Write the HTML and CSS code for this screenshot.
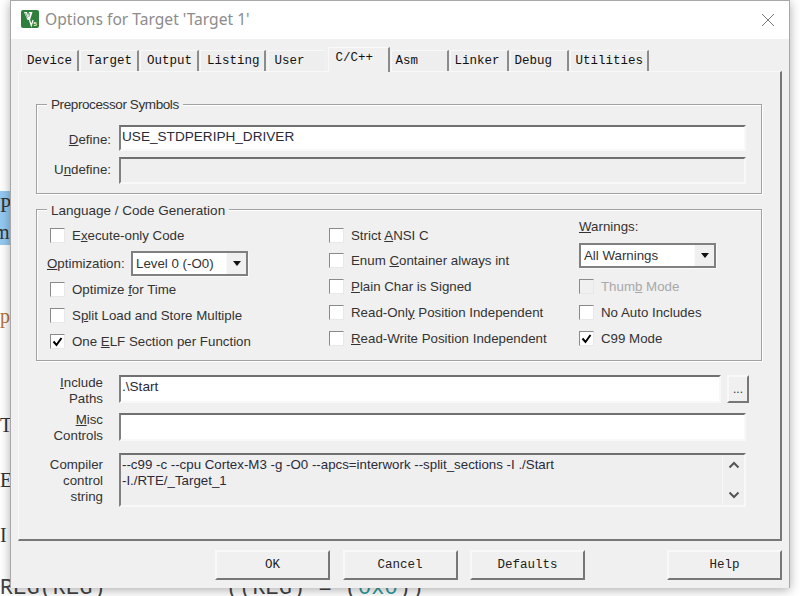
FILE: index.html
```html
<!DOCTYPE html>
<html lang="en">
<head>
<meta charset="utf-8">
<title>Options for Target 'Target 1'</title>
<link rel="stylesheet" href="styles.css">
</head>
<body>
<div class="desktop">
  <div class="code-bg">
    <div class="selection"></div>
    <span class="cg cg-p1">P</span>
    <span class="cg cg-m">m</span>
    <span class="cg cg-p2">p</span>
    <span class="cg cg-t">T</span>
    <span class="cg cg-e">E</span>
    <span class="cg cg-i">I</span>
    <span class="cg cg-reg">REG(REG)</span>
    <span class="cg cg-expr">((REG) = (<span class="teal">0x0</span>))</span>
  </div>

  <div class="window">
    <header class="titlebar">
      <svg class="logo" width="18" height="18" viewBox="0 0 18 18">
        <rect x="0" y="0" width="18" height="18" rx="2" fill="#2f7f3c"/>
        <path d="M3 2h3l1 4 1-4h3.500L9 10H6.500z" fill="#fff"/>
        <path d="M4.500 3l1.800 5M8.800 3l-1 4" stroke="#2f7f3c" stroke-width=".7" fill="none"/>
        <path d="M8.500 10l1.800 5.500 1.800-5.500" fill="none" stroke="#fff" stroke-width="1.200"/>
        <text x="12.500" y="16" class="logo-s">5</text>
      </svg>
      <span class="title">Options for Target 'Target 1'</span>
      <svg class="close" width="14" height="14" viewBox="0 0 14 14"><path d="M1 1l12 12M13 1L1 13" stroke="#777" stroke-width="1" fill="none"/></svg>
    </header>

    <nav class="tabs">
      <span class="tab">Device</span>
      <span class="tab">Target</span>
      <span class="tab">Output</span>
      <span class="tab">Listing</span>
      <span class="tab tab-user">User</span>
      <span class="tab active">C/C++</span>
      <span class="tab">Asm</span>
      <span class="tab">Linker</span>
      <span class="tab">Debug</span>
      <span class="tab">Utilities</span>
    </nav>

    <main class="panel">
      <section class="group group-pre">
        <span class="legend legend-pre">Preprocessor Symbols</span>
        <div class="field-row row-define">
          <label class="flabel"><u>D</u>efine:</label>
          <div class="input">USE_STDPERIPH_DRIVER</div>
        </div>
        <div class="field-row row-undefine">
          <label class="flabel">U<u>n</u>define:</label>
          <div class="input disabled"></div>
        </div>
      </section>

      <section class="group group-lang">
        <span class="legend legend-lang">Language / Code Generation</span>
        <div class="col col1">
          <div class="check"><i class="box"></i><span>E<u>x</u>ecute-only Code</span></div>
          <div class="opt">
            <label><u>O</u>ptimization:</label>
            <div class="select sel-opt"><span>Level 0 (-O0)</span><b class="drop"><svg width="10" height="5" viewBox="0 0 10 5"><path d="M1 0h8L5 5z" fill="#111"/></svg></b></div>
          </div>
          <div class="check"><i class="box"></i><span>Optimize <u>f</u>or Time</span></div>
          <div class="check"><i class="box"></i><span>S<u>p</u>lit Load and Store Multiple</span></div>
          <div class="check"><i class="box checked"><svg width="13" height="13" viewBox="0 0 13 13"><path d="M2.500 6.500l3 3.500 5-7" fill="none" stroke="#000" stroke-width="2"/></svg></i><span>One <u>E</u>LF Section per Function</span></div>
        </div>
        <div class="col col2">
          <div class="check check-short"><i class="box"></i><span>Strict <u>A</u>NSI C</span></div>
          <div class="check"><i class="box"></i><span>Enum <u>C</u>ontainer always int</span></div>
          <div class="check"><i class="box"></i><span><u>P</u>lain Char is Signed</span></div>
          <div class="check"><i class="box"></i><span>Read-Onl<u>y</u> Position Independent</span></div>
          <div class="check"><i class="box"></i><span><u>R</u>ead-Write Position Independent</span></div>
        </div>
        <div class="col col3">
          <label class="warn-label"><u>W</u>arnings:</label>
          <div class="select sel-warn"><span>All Warnings</span><b class="drop"><svg width="10" height="5" viewBox="0 0 10 5"><path d="M1 0h8L5 5z" fill="#111"/></svg></b></div>
          <div class="check dim"><i class="box"></i><span>Thum<u>b</u> Mode</span></div>
          <div class="check"><i class="box"></i><span>No Auto Includes</span></div>
          <div class="check"><i class="box checked"><svg width="13" height="13" viewBox="0 0 13 13"><path d="M2.500 6.500l3 3.500 5-7" fill="none" stroke="#000" stroke-width="2"/></svg></i><span>C99 Mode</span></div>
        </div>
      </section>

      <section class="lower">
        <div class="lower-row row-include">
          <label class="llabel"><u>I</u>nclude<br>Paths</label>
          <div class="input">.\Start</div>
          <button class="browse">...</button>
        </div>
        <div class="lower-row row-misc">
          <label class="llabel"><u>M</u>isc<br>Controls</label>
          <div class="input"></div>
        </div>
        <div class="lower-row row-compiler">
          <label class="llabel">Compiler<br>control<br>string</label>
          <div class="input disabled multi">
            <div class="multi-text">--c99 -c --cpu Cortex-M3 -g -O0 --apcs=interwork --split_sections -I ./Start<br>-I./RTE/_Target_1</div>
            <div class="scroll">
              <svg width="12" height="8" viewBox="0 0 12 8"><path d="M1.500 6.500L6 2l4.500 4.500" fill="none" stroke="#555" stroke-width="2"/></svg>
              <svg width="12" height="8" viewBox="0 0 12 8"><path d="M1.500 1.500L6 6l4.500-4.500" fill="none" stroke="#555" stroke-width="2"/></svg>
            </div>
          </div>
        </div>
      </section>
    </main>

    <footer class="buttons">
      <button class="btn">OK</button>
      <button class="btn">Cancel</button>
      <button class="btn">Defaults</button>
      <button class="btn btn-help">Help</button>
    </footer>
  </div>
</div>
</body>
</html>
```

FILE: styles.css
```css
* { box-sizing: border-box; }
html, body { margin: 0; padding: 0; }
body { background: #fff; font-family: "Liberation Sans", Arial, sans-serif; }
.desktop { position: relative; width: 800px; height: 596px; overflow: hidden; background: #fff; }

/* code editor visible behind the dialog */
.selection { position: absolute; left: 0; top: 191px; width: 12px; height: 54px; background: #94c9f2; }
.cg { position: absolute; font-family: "Liberation Serif", serif; font-size: 20px; line-height: 20px; color: #333; }
.cg-p1 { left: 0; top: 195px; }
.cg-m { left: -6px; top: 222px; }
.cg-p2 { left: 0; top: 306px; color: #b5703a; }
.cg-t { left: 0; top: 415px; }
.cg-e { left: 0; top: 470px; }
.cg-i { left: 0; top: 525px; }
.cg-reg, .cg-expr { font-family: "Liberation Mono", monospace; font-size: 22px; line-height: 22px; top: 578px; color: #444; }
.cg-reg { left: 0; }
.cg-expr { left: 226px; }
.teal { color: #2a9a9a; }

.window {
  position: absolute; left: 10px; top: 0; width: 780px; height: 588px;
  background: #f0f0f0; border: 1px solid #a8a8a8; border-bottom: 0;
  box-shadow: 0 2px 10px rgba(0, 0, 0, .32);
  display: flex; flex-direction: column;
}

.titlebar { height: 38px; background: #fff; display: flex; align-items: center; padding: 0 14px 2px 10px; flex: none; }
.logo { flex: none; margin-right: 6px; }
.logo-s { font: bold 6px "Liberation Sans", sans-serif; fill: #fff; }
.title { font-family: "Noto Sans", sans-serif; font-size: 15.6px; color: #8c8c8c; flex: 1; }
.close { flex: none; margin-top: 2px; }

.tabs { display: flex; align-items: flex-end; gap: 1px; height: 32px; padding-left: 10px; flex: none; position: relative; z-index: 1; }
.tab {
  height: 21px; min-width: 58px; padding: 0 4px 0 5px;
  font-family: "Liberation Mono", monospace; font-size: 12.5px; line-height: 21px; color: #111;
  background: #eeeeee; border-top: 1px solid #f8f8f8; border-left: 1px solid #f8f8f8; border-right: 2px solid #8c8c8c;
}
.tab:nth-child(2), .tab:nth-child(3), .tab:nth-child(8), .tab:nth-child(9) { min-width: 59px; }
.tab:nth-child(n+2):nth-child(-n+5) { padding-left: 6px; }
.tab:nth-child(n+7):nth-child(-n+9) { padding-left: 4px; }
.tab-user { margin-left: 1px; border-right-color: #f0f0f0; }
.tab.active {
  height: 25px; min-width: 62px; margin-left: 1px; padding: 0 7px; line-height: 21px;
  background: #f0f0f0; margin-bottom: -1px; border-top: 1px solid #fafafa;
}

.panel {
  width: 764px; height: 470px; margin-left: 7px; padding: 32px 20px 0 18px; flex: none;
  border: 1px solid #f8f8f8; border-right: 2px solid #777; border-bottom: 2px solid #777;
  display: flex; flex-direction: column;
  font-size: 13.3px; color: #333;
}

.group { position: relative; border: 1px solid #a2a2a2; box-shadow: 1px 1px 0 #fff, inset 1px 1px 0 #fff; flex: none; }
.legend { position: absolute; left: 10px; top: -8px; height: 16px; line-height: 16px; padding: 0 4px; background: #f0f0f0; white-space: nowrap; font-size: 13.5px; }
.legend-pre { letter-spacing: -.4px; }
.legend-lang { top: -7px; }

.group-pre { height: 90px; padding: 20px 15px 0 0; display: flex; flex-direction: column; gap: 6px; margin: 0 -2px 0 -1px; }
.field-row { display: flex; align-items: center; }
.row-define { height: 26px; }
.row-undefine { height: 27px; }
.flabel { width: 74px; text-align: right; margin-right: 8px; flex: none; }
.row-define .flabel { margin-top: 2px; }
.row-undefine .flabel { margin-top: -3px; }
.input {
  background: #fff; height: 100%; flex: 1; padding: 1px 0 0 1px; line-height: 17px; color: #2a2a3a; font-size: 13.6px;
  border: 2px solid; border-color: #707070 #f8f8f8 #f8f8f8 #808080;
}
.input.disabled { background: #efefef; }

.group-lang { height: 152px; margin: 15px -2px 0 -1px; display: flex; }
.col { display: flex; flex-direction: column; }
.col1 { width: 292px; padding: 12px 0 0 13px; }
.col2 { width: 250px; padding: 12px 0 0 0; }
.col3 { flex: 1; padding: 9px 0 0 0; }

.check { display: flex; align-items: center; height: 26px; white-space: nowrap; }
.check-short { height: 25px; padding-top: 2px; }
.box {
  width: 15px; height: 15px; background: #fff; flex: none; margin-right: 7px;
  border: 1px solid; border-color: #8a8a8a #e8e8e8 #e8e8e8 #8a8a8a;
  display: flex; align-items: center; justify-content: center;
}
.dim { color: #a8a8a8; }
.dim .box { background: #f0f0f0; }

.opt { display: flex; align-items: center; height: 28px; margin: 1px 0 -1px -3px; white-space: nowrap; }
.opt label { width: 84px; flex: none; }
.select {
  height: 25px; background: #fff; display: flex; align-items: center; justify-content: space-between;
  border: 2px solid #808080; padding-left: 3px;
  box-shadow: 1px 1px 0 #fafafa; flex: none;
}
.sel-opt { width: 117px; }
.sel-warn { width: 137px; margin-top: 2px; margin-bottom: 5px; }
.drop {
  width: 20px; height: 100%; display: flex; align-items: center; justify-content: center; background: #f0f0f0;
  border-left: 1px solid #fafafa;
}
.warn-label { height: 22px; line-height: 16px; }

.lower { display: flex; flex-direction: column; margin-top: 14px; }
.lower-row { display: flex; flex: none; }
.llabel { width: 66px; text-align: right; margin-right: 16px; line-height: 15.5px; flex: none; }
.row-include { height: 28px; }
.row-misc { height: 28px; margin-top: 10px; }
.row-misc .llabel { margin-top: -1px; }
.row-compiler { height: 54px; margin-top: 12px; }
.row-include .input { margin-right: 6px; flex: none; width: 602px; }
.row-misc .input, .row-compiler .input { flex: none; width: 627px; }
.row-compiler .llabel { line-height: 16px; padding-top: 4px; }
.browse {
  width: 22px; height: 28px; font: 12px "Liberation Sans", sans-serif; padding: 0; color: #333; background: #f0f0f0;
  border: 2px solid; border-color: #f8f8f8 #777 #777 #f8f8f8;
}
.multi { display: flex; justify-content: space-between; }
.multi-text { flex: 1; line-height: 16px; padding-top: 1px; font-size: 13.3px; }
.scroll { width: 22px; display: flex; flex-direction: column; justify-content: space-between; align-items: center; padding: 5px 0 6px; border-left: 1px solid #f8f8f8; }

.buttons { display: flex; padding: 9px 7px 0 204px; flex: none; }
.btn {
  width: 115px; height: 30px; margin-right: 12.5px; padding: 0; color: #222; background: #f0f0f0;
  font-family: "Liberation Mono", monospace; font-size: 12.5px;
  border: 2px solid; border-color: #f8f8f8 #777 #777 #f8f8f8;
}
.btn-help { margin: 0 0 0 auto; }
```
